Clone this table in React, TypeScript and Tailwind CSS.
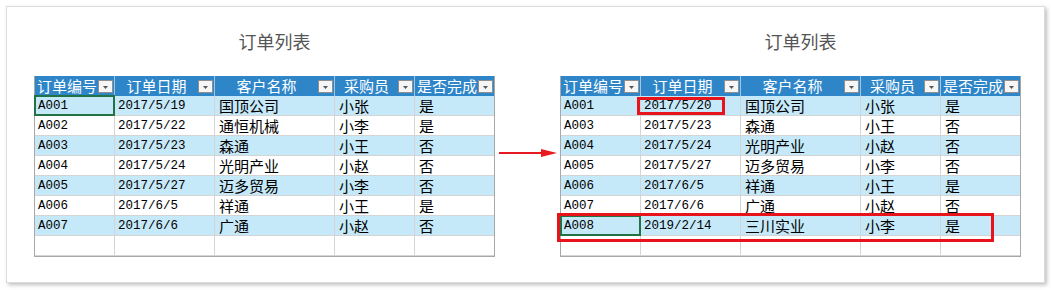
const cjk = "font-['Noto_Sans_CJK_SC',sans-serif]";
const mono = "font-['Liberation_Mono','Noto_Sans_CJK_SC',monospace]";

const widths = ["w-[80px]", "w-[100px]", "w-[120px]", "w-[80px]", "w-[79px]"];
const headers = ["订单编号", "订单日期", "客户名称", "采购员", "是否完成"];

type Row = string[];

const leftRows: Row[] = [
  ["A001", "2017/5/19", "国顶公司", "小张", "是"],
  ["A002", "2017/5/22", "通恒机械", "小李", "是"],
  ["A003", "2017/5/23", "森通", "小王", "否"],
  ["A004", "2017/5/24", "光明产业", "小赵", "否"],
  ["A005", "2017/5/27", "迈多贸易", "小李", "否"],
  ["A006", "2017/6/5", "祥通", "小王", "是"],
  ["A007", "2017/6/6", "广通", "小赵", "否"],
];

const rightRows: Row[] = [
  ["A001", "2017/5/20", "国顶公司", "小张", "是"],
  ["A003", "2017/5/23", "森通", "小王", "否"],
  ["A004", "2017/5/24", "光明产业", "小赵", "否"],
  ["A005", "2017/5/27", "迈多贸易", "小李", "否"],
  ["A006", "2017/6/5", "祥通", "小王", "是"],
  ["A007", "2017/6/6", "广通", "小赵", "否"],
  ["A008", "2019/2/14", "三川实业", "小李", "是"],
];

function FilterButton() {
  return (
    <span className="absolute right-[1px] top-[4px] w-[15px] h-[13px] bg-[#f6f6f6] border border-[#8f8f8f] flex items-center justify-center">
      <svg width="7" height="4" viewBox="0 0 7 4" className="mt-[2px]">
        <path d="M1 0 L6 0 L3.5 3 Z" fill="#555" />
      </svg>
    </span>
  );
}

function Table({ rows, selected }: { rows: Row[]; selected: number }) {
  const all = [...rows, ["", "", "", "", ""]];
  return (
    <div className="w-[461px] border-l border-r border-b border-[#a8a8a8]">
      <div className="flex h-[20px] bg-[#2e86c9]">
        {headers.map((h, i) => (
          <div
            key={h}
            className={`relative ${widths[i]} h-[20px] border-r border-[#9fc6e6] last:border-r-0 pr-[16px] text-white text-[15px] leading-[20px] whitespace-nowrap overflow-hidden ${cjk} ${i === 0 || i === 4 ? "pl-[2px] text-left" : "text-center"}`}
          >
            {h}
            <FilterButton />
          </div>
        ))}
      </div>
      {all.map((r, ri) => (
        <div key={ri} className={`flex h-[20px] ${ri % 2 === 0 && ri < rows.length ? "bg-[#c6e9fa]" : "bg-white"}`}>
          {r.map((c, ci) => (
            <div
              key={ci}
              className={`relative ${widths[ci]} h-[20px] border-r border-b border-[#d4d4d4] last:border-r-0 text-black whitespace-nowrap ${ci < 2 ? `${mono} text-[12.5px] leading-[20px] pl-[3px]` : `${cjk} text-[15px] leading-[19px] pl-[4px]`}`}
            >
              {c}
              {ri === selected && ci === 0 && (
                <span className="absolute -left-[1px] -top-[1px] w-[81px] h-[21px] border-2 border-[#217346]" />
              )}
            </div>
          ))}
        </div>
      ))}
    </div>
  );
}

function Section({ children, overlay }: { children: React.ReactNode; overlay?: React.ReactNode }) {
  return (
    <div className="flex flex-col">
      <div className={`pl-[20px] text-center text-[18px] leading-[20px] text-[#555] ${cjk}`}>订单列表</div>
      <div className="relative mt-[25px]">
        {children}
        {overlay}
      </div>
    </div>
  );
}

export default function App() {
  return (
    <div className="w-[1051px] h-[290px] bg-white pt-[6px] pl-[6px]">
      <div className="w-[1039px] h-[277px] bg-white border border-[#dcdcdc] shadow-[2px_2px_4px_rgba(0,0,0,0.25)] pt-[24px] pl-[27px] flex items-start">
        <Section>
          <Table rows={leftRows} selected={0} />
        </Section>
        <div className="w-[65px] pt-[117px]">
          <svg width="65" height="10" viewBox="0 0 65 10">
            <line x1="4" y1="5" x2="48" y2="5" stroke="#e8191f" strokeWidth="2" />
            <path d="M46 1 L62 5 L46 9 Z" fill="#e8191f" />
          </svg>
        </div>
        <Section
          overlay={
            <>
              <span className="absolute left-[77px] top-[21px] w-[88px] h-[18px] border-[3px] border-[#e8141b]" />
              <span className="absolute -left-[3px] top-[137px] w-[437px] h-[29px] border-[3px] border-[#e8141b]" />
            </>
          }
        >
          <Table rows={rightRows} selected={6} />
        </Section>
      </div>
    </div>
  );
}
